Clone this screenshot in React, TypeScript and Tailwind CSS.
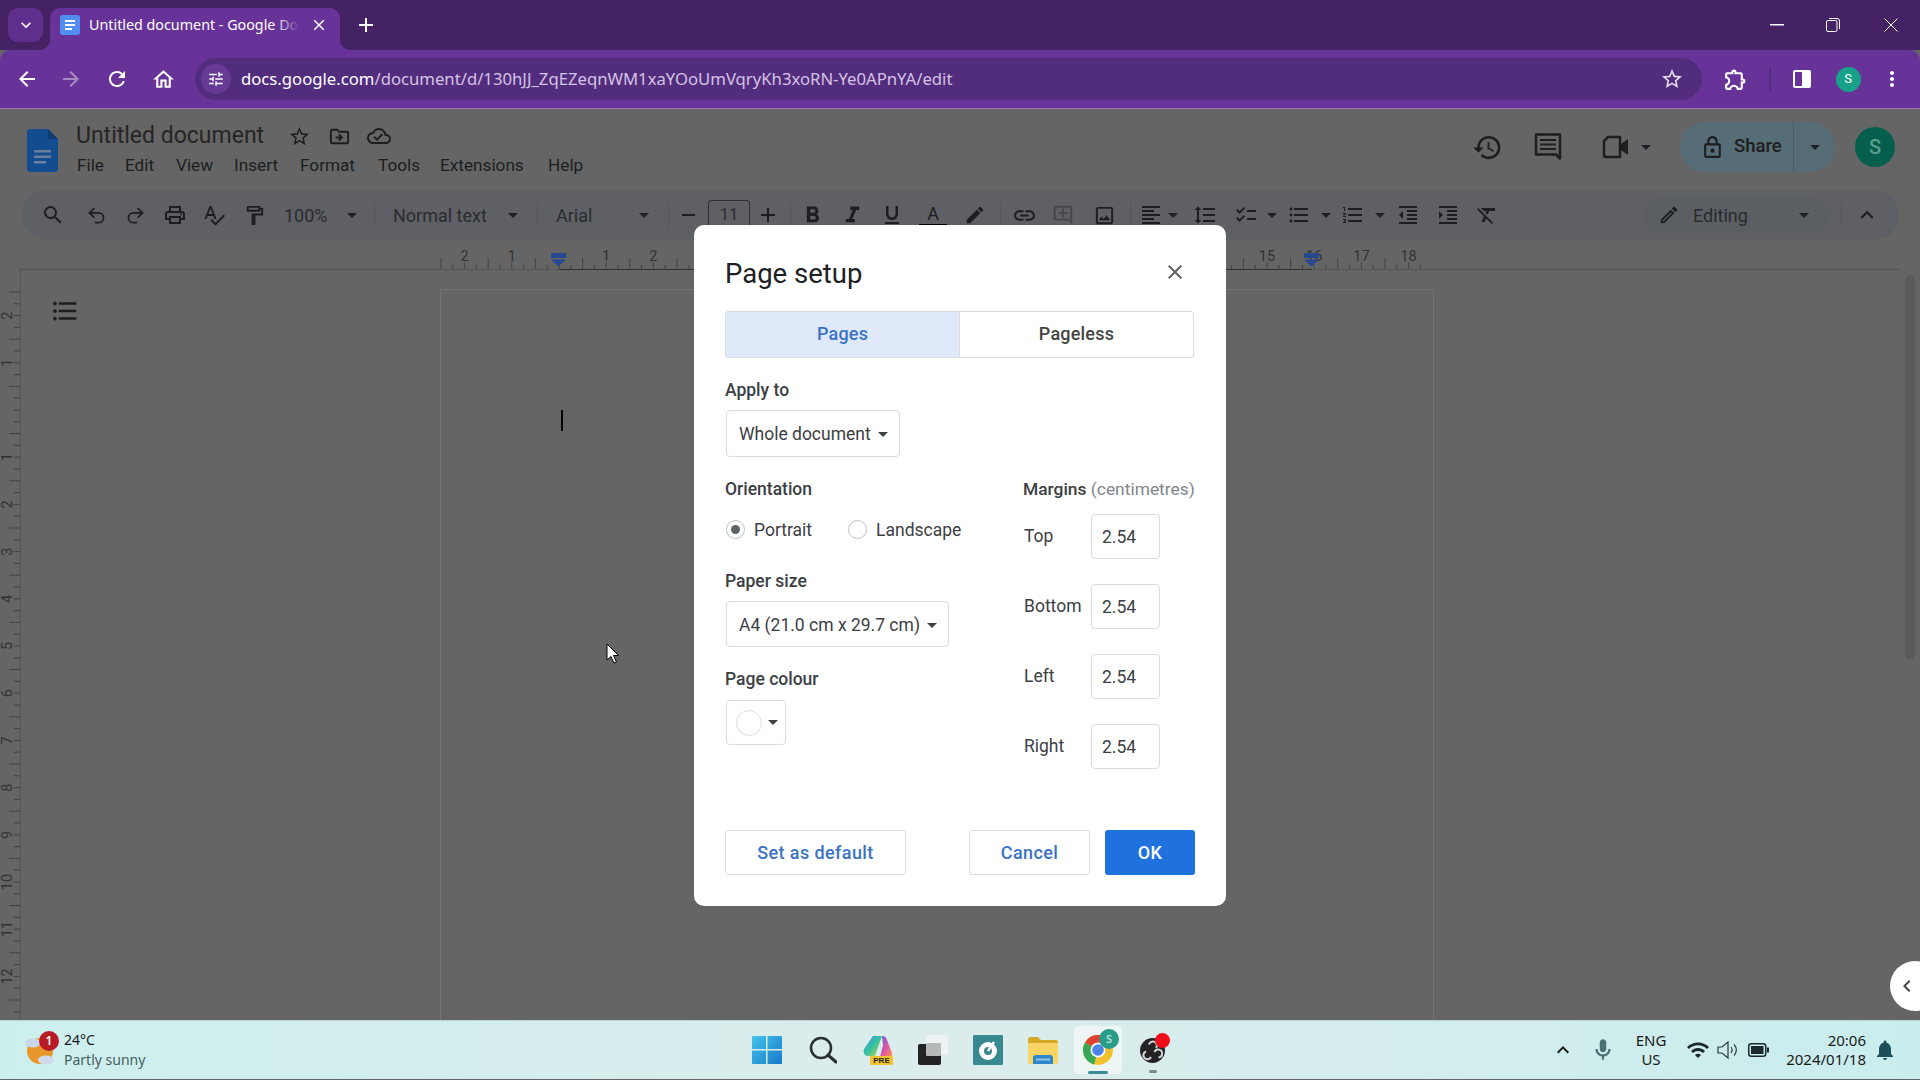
import React from "react";
import {
  MdSearch, MdOutlinePrint, MdSpellcheck, MdOutlineFormatPaint, MdFormatBold, MdFormatItalic,
  MdFormatUnderlined, MdLink, MdOutlineAddComment, MdOutlineImage, MdFormatAlignLeft, MdFormatLineSpacing, MdChecklist,
  MdFormatListBulleted, MdFormatListNumbered, MdFormatIndentDecrease, MdFormatIndentIncrease, MdFormatClear, MdHistory,
  MdOutlineLock, MdOutlineEdit, MdExpandLess, MdStarBorder, MdOutlineDriveFileMove, MdOutlineCloudDone, MdArrowBack,
  MdArrowForward, MdRefresh, MdOutlineHome, MdOutlineExtension, MdMoreVert, MdClose, MdAdd, MdKeyboardArrowDown,
  MdWifi, MdOutlineMic, MdNotifications, MdKeyboardArrowUp, MdChevronLeft, MdOutlineTune, MdEdit,
} from "react-icons/md";
import { Undo2, Redo2 } from "lucide-react";

const Caret = ({ c = "border-t-[#202124]" }: { c?: string }) => (
  <div className="w-[12px] shrink-0 flex justify-center">
    <div className={`w-0 h-0 border-x-[5px] border-x-transparent border-t-[5px] ${c}`} />
  </div>
);
const Div = ({ c }: { c: string }) => <div className={`w-px h-[24px] bg-[#54565a] shrink-0 ${c}`} />;
const Cell = ({ c, children }: { c: string; children: React.ReactNode }) => (
  <div className={`flex items-center justify-center shrink-0 text-[#1d1e20] ${c}`}>{children}</div>
);

function HRuler() {
  const ticks: React.ReactNode[] = [];
  for (let n = 0; n < 21; n++) {
    const x = 441 + 47.2 * n;
    ticks.push(<line key={`a${n}`} x1={x} x2={x} y1={18} y2={29} stroke="#444" />);
    ticks.push(<line key={`b${n}`} x1={x + 11.8} x2={x + 11.8} y1={25} y2={29} stroke="#444" />);
    ticks.push(<line key={`c${n}`} x1={x + 23.6} x2={x + 23.6} y1={22} y2={29} stroke="#444" />);
    ticks.push(<line key={`d${n}`} x1={x + 35.4} x2={x + 35.4} y1={25} y2={29} stroke="#444" />);
    const lx = x + 23.6;
    if (n !== 2 && (lx < 690 || lx > 1230)) {
      ticks.push(
        <text key={`t${n}`} x={lx} y={21} textAnchor="middle" fontSize="14.5" fill="#333" fontFamily="Roboto, sans-serif">
          {Math.abs(n - 2)}
        </text>
      );
    }
  }
  return (
    <svg width="1920" height="30" viewBox="0 0 1920 30" className="block shrink-0">
      <line x1="20" x2="1900" y1="29.5" y2="29.5" stroke="#555" />
      <line x1="559" x2="1312" y1="29.5" y2="29.5" stroke="#333" />
      {ticks}
      <rect x="551" y="13" width="15" height="5" fill="#28498f" />
      <path d="M551 19.5h15l-7.5 7z" fill="#28498f" />
      <rect x="1304" y="13" width="15" height="5" fill="#28498f" />
      <path d="M1304 19.5h15l-7.5 7z" fill="#28498f" />
    </svg>
  );
}

function VRuler() {
  const t: React.ReactNode[] = [];
  for (let m = -10; m <= 51; m++) {
    const y = 140 + 11.8 * m;
    const major = ((m + 2) % 4 + 4) % 4 === 0;
    t.push(<line key={m} x1={major ? 9 : 13.5} x2={20} y1={y} y2={y} stroke="#444" />);
  }
  [-2, -1, 1, 2, 3, 4, 5, 6, 7, 8, 9, 10, 11, 12].forEach((k) => {
    const y = 140 + 47.2 * k;
    t.push(
      <text key={`n${k}`} x={0} y={0} transform={`translate(12 ${y}) rotate(-90)`} textAnchor="middle" fontSize="14.5" fill="#333" fontFamily="Roboto, sans-serif">
        {Math.abs(k)}
      </text>
    );
  });
  return (
    <svg width="21" height="750" viewBox="0 0 21 750" className="block shrink-0">
      <line x1="20.5" x2="20.5" y1="0" y2="750" stroke="#555" />
      {t}
    </svg>
  );
}

const DocsLogo = () => (
  <svg width="31" height="43" viewBox="0 0 31 43" className="shrink-0">
    <path d="M3 0h18l10 10v30a3 3 0 0 1-3 3H3a3 3 0 0 1-3-3V3a3 3 0 0 1 3-3z" fill="#134d90" />
    <path d="M21 0l10 10H21z" fill="#0e3b70" />
    <path d="M7 21h17v2.5H7zM7 26.5h17V29H7zM7 32h12v2.5H7z" fill="#6a7f9c" />
  </svg>
);

const Label = ({ c, children }: { c?: string; children: React.ReactNode }) => (
  <div className={`h-[24px] leading-[24px] text-[17.5px] font-medium text-[#3c4043] ${c ?? ""}`}>{children}</div>
);

const Box = ({ c, children }: { c: string; children: React.ReactNode }) => (
  <div className={`border border-[#dadce0] rounded-[4px] flex items-center shrink-0 text-[#3c4043] text-[17.5px] ${c}`}>{children}</div>
);

const Margin = ({ label, c }: { label: string; c?: string }) => (
  <div className={`flex items-center h-[45px] ${c ?? ""}`}>
    <div className="w-[68px] pl-px pb-px text-[17.5px] text-[#3c4043]">{label}</div>
    <Box c="w-[69px] h-[45px] pl-[10px] pt-[2px]">2.54</Box>
  </div>
);

function Dialog() {
  return (
    <div className="absolute left-[694px] top-[225px] w-[532px] h-[681px] bg-white rounded-[10px] pl-[31px] pr-[32px] pb-[31px] flex flex-col">
      <div className="h-[86px] flex items-center justify-between shrink-0 pt-[8px]">
        <div className="text-[27.5px] text-[#202124] leading-none mt-[4px]">Page setup</div>
        <MdClose className="text-[#5f6368] mr-[7px]" size={24} />
      </div>
      <div className="flex h-[47px] border border-[#dadce0] rounded-[3px] shrink-0 text-[18px] tracking-[0.2px] pb-[2px]">
        <div className="w-[234px] -mb-[2px] pb-[2px] bg-[#dfe9f9] text-[#3b73c4] font-medium flex items-center justify-center border-r border-[#dadce0]">Pages</div>
        <div className="flex-1 text-[#444] font-medium flex items-center justify-center">Pageless</div>
      </div>
      <div className="flex justify-between">
        <div className="flex flex-col">
          <Label c="mt-[20px]">Apply to</Label>
          <Box c="mt-[8px] ml-px w-[174px] h-[47px] pl-[12px] pt-[2px]">
            <span>Whole document</span>
            <div className="w-0 h-0 ml-[7px] border-x-[5px] border-x-transparent border-t-[5px] border-t-[#3c4043]" />
          </Box>
          <Label c="mt-[20px]">Orientation</Label>
          <div className="mt-[14px] h-[28px] flex items-center text-[17.5px] text-[#3c4043]">
            <div className="w-[19px] h-[19px] ml-px rounded-full border border-[#bdc1c6] flex items-center justify-center">
              <div className="w-[9px] h-[9px] rounded-full bg-[#5f6368]" />
            </div>
            <span className="ml-[9px] mt-[2px]">Portrait</span>
            <div className="w-[19px] h-[19px] ml-[36px] rounded-full border border-[#bdc1c6]" />
            <span className="ml-[9px] mt-[2px]">Landscape</span>
          </div>
          <Label c="mt-[26px]">Paper size</Label>
          <Box c="mt-[8px] ml-px w-[223px] h-[46px] pl-[12px] pt-[2px]">
            <span>A4 (21.0 cm x 29.7 cm)</span>
            <div className="w-0 h-0 ml-[7px] border-x-[5px] border-x-transparent border-t-[5px] border-t-[#3c4043]" />
          </Box>
          <Label c="mt-[20px]">Page colour</Label>
          <Box c="mt-[9px] ml-px w-[60px] h-[45px] pl-[9px]">
            <div className="w-[26px] h-[26px] rounded-full border border-[#dadce0]" />
            <div className="w-0 h-0 ml-[6px] border-x-[5px] border-x-transparent border-t-[5px] border-t-[#3c4043]" />
          </Box>
        </div>
        <div className="flex flex-col w-[171px] pt-[119px]">
          <div className="h-[24px] leading-[24px] text-[17.4px] whitespace-nowrap">
            <span className="font-medium text-[#3c4043]">Margins</span> <span className="text-[#80868b]">(centimetres)</span>
          </div>
          <Margin label="Top" c="mt-[13px]" />
          <Margin label="Bottom" c="mt-[25px]" />
          <Margin label="Left" c="mt-[25px]" />
          <Margin label="Right" c="mt-[25px]" />
        </div>
      </div>
      <div className="mt-auto flex text-[18px] font-medium tracking-[0.4px]">
        <div className="w-[181px] shrink-0 h-[45px] border border-[#dadce0] rounded-[3px] text-[#3b73c4] flex items-center justify-center">Set as default</div>
        <div className="ml-[63px] w-[121px] shrink-0 h-[45px] border border-[#dadce0] rounded-[3px] text-[#3b73c4] flex items-center justify-center">Cancel</div>
        <div className="ml-[15px] w-[90px] shrink-0 h-[45px] rounded-[3px] bg-[#1f72de] text-white flex items-center justify-center">OK</div>
      </div>
    </div>
  );
}

const Chrome = () => (
  <svg width="30" height="30" viewBox="0 0 30 30">
    <circle cx="15" cy="15" r="15" fill="#f2c12e" />
    <path d="M15 15L2 7.5A15 15 0 0 1 28 7.5z" fill="#e0402f" />
    <path d="M15 15L2 7.5A15 15 0 0 0 11 29.5z" fill="#3aa757" />
    <circle cx="15" cy="15" r="7.5" fill="#fff" />
    <circle cx="15" cy="15" r="5.8" fill="#4c85e8" />
  </svg>
);

function Taskbar() {
  return (
    <div className="h-[59px] shrink-0 border-t border-[#b9d2d2] bg-linear-to-r from-[#ccefee] via-[#dcecec] to-[#c9eded] flex items-center font-['Noto_Sans'] text-[#1a1a1a]">
      <div className="relative w-[30px] h-[32px] ml-[25px] shrink-0">
        <svg width="30" height="32" viewBox="0 0 30 32">
          <circle cx="15" cy="17" r="13" fill="#e8982a" />
          <ellipse cx="8" cy="9" rx="7.5" ry="4.5" fill="#c9d6ea" />
          <ellipse cx="21" cy="26" rx="8" ry="4.5" fill="#cfd9ea" />
        </svg>
        <div className="absolute left-[14px] -top-[3px] w-[20px] h-[20px] rounded-full bg-[#b81c25] text-white text-[12px] font-semibold flex items-center justify-center">1</div>
      </div>
      <div className="ml-[9px] w-[120px] shrink-0 leading-[20px]">
        <div className="text-[14px]">24°C</div>
        <div className="text-[14px] text-[#47605f]">Partly sunny</div>
      </div>
      <div className="ml-[568px] w-[30px] h-[30px] shrink-0">
        <svg width="30" height="30" viewBox="0 0 30 30">
          <defs>
            <linearGradient id="w" x1="0" y1="0" x2="1" y2="1">
              <stop offset="0" stopColor="#45c5ec" />
              <stop offset="1" stopColor="#1679c9" />
            </linearGradient>
          </defs>
          <path d="M1 1h13v13H0V2a1 1 0 0 1 1-1zM15.500 1H29a1 1 0 0 1 1 1v12H15.500zM0 15.500h14V29H1a1 1 0 0 1-1-1zM15.500 15.500H30V28a1 1 0 0 1-1 1H15.500z" fill="url(#w)" />
        </svg>
      </div>
      <div className="ml-[27px] w-[28px] shrink-0">
        <svg width="28" height="28" viewBox="0 0 28 28" fill="none" stroke="#2a2f30" strokeWidth="2.500">
          <circle cx="12" cy="12" r="10" />
          <path d="M19 19l8 7" strokeLinecap="round" strokeWidth="3" />
        </svg>
      </div>
      <div className="relative ml-[26px] w-[30px] h-[30px] shrink-0">
        <svg width="30" height="28" viewBox="0 0 30 28">
          <defs>
            <linearGradient id="c1" x1="0" y1="0" x2="1" y2="1">
              <stop offset="0" stopColor="#3d8ee8" />
              <stop offset="0.5" stopColor="#35c3a0" />
              <stop offset="1" stopColor="#d9d63c" />
            </linearGradient>
            <linearGradient id="c2" x1="0" y1="0" x2="1" y2="1">
              <stop offset="0" stopColor="#6a5be2" />
              <stop offset="0.6" stopColor="#e85a9c" />
              <stop offset="1" stopColor="#f4a23c" />
            </linearGradient>
          </defs>
          <path d="M10 1h9l-7 20H5C1 21 0 17 1 14z" fill="url(#c1)" />
          <path d="M19 1c3 0 4 1 5 4l5 13c1 3-1 4-3 4h-9l3-12z" fill="url(#c2)" />
        </svg>
        <div className="absolute left-[7px] top-[21px] w-[23px] h-[9px] bg-[#f4c430] rounded-[1px] text-[8px] font-bold leading-[9px] text-[#222] text-center font-['Liberation_Sans']">PRE</div>
      </div>
      <div className="relative ml-[25px] w-[31px] h-[30px] shrink-0">
        <div className="absolute right-[1px] top-0 w-[22px] h-[20px] bg-[#eef2f2] rounded-[2px]" />
        <div className="absolute left-0 bottom-0 w-[23px] h-[21px] bg-[#232323] rounded-[2px]" />
        <div className="absolute left-[8px] top-[8px] w-[15px] h-[13px] bg-[#b8b8b8] rounded-[1px]" />
      </div>
      <div className="ml-[24px] w-[30px] h-[30px] bg-[#37888f] rounded-[1px] shrink-0 flex items-center justify-center">
        <svg width="24" height="24" viewBox="0 0 24 24">
          <circle cx="12" cy="13" r="9" fill="#fff" />
          <circle cx="12" cy="13" r="4" fill="#37888f" />
          <path d="M12 13l6-9" stroke="#fff" strokeWidth="2.500" />
        </svg>
      </div>
      <div className="ml-[25px] w-[30px] h-[28px] shrink-0">
        <svg width="30" height="28" viewBox="0 0 30 28">
          <path d="M0 3a2 2 0 0 1 2-2h8l3 3h15a2 2 0 0 1 2 2v3H0z" fill="#d8a928" />
          <path d="M0 7h30v19a2 2 0 0 1-2 2H2a2 2 0 0 1-2-2z" fill="#f8d666" />
          <path d="M5 22a3 3 0 0 1 3-3h14a3 3 0 0 1 3 3v6H5z" fill="#2e87c8" />
          <rect x="8" y="22.500" width="14" height="2" fill="#8ec6ea" />
        </svg>
      </div>
      <div className="relative ml-[16px] w-[48px] h-[48px] bg-[#eef5f5] rounded-[4px] shrink-0 flex items-center justify-center">
        <Chrome />
        <div className="absolute left-[25px] top-[3px] w-[20px] h-[20px] rounded-full bg-[#2a9d88] text-white/70 text-[11px] font-semibold flex items-center justify-center">S</div>
        <div className="absolute left-[14px] top-[45px] w-[20px] h-[3px] rounded-full bg-[#3a8a94]" />
      </div>
      <div className="relative ml-[18px] w-[25px] h-[25px] rounded-full bg-[#232326] shrink-0 flex items-center justify-center">
        <svg width="21" height="21" viewBox="0 0 21 21" fill="none" stroke="#d5d5d5" strokeWidth="2">
          <path d="M7 4.500a4 4 0 1 1 7 3.500" />
          <path d="M9 17a4 4 0 1 1-5-5.500" />
          <path d="M12.500 12a4 4 0 1 1 4 5.500" />
        </svg>
        <div className="absolute left-[15px] -top-[5px] w-[15px] h-[15px] rounded-full bg-[#ee0d18]" />
        <div className="absolute left-[9px] top-[32px] w-[8px] h-[3px] rounded-full bg-[#7a8888]" />
      </div>
      <MdKeyboardArrowUp size={24} className="ml-[386px] shrink-0 text-[#1a1a1a]" />
      <MdOutlineMic size={26} className="ml-[15px] shrink-0 text-[#4a7174]" />
      <div className="ml-[19px] w-[32px] shrink-0 text-center text-[15px] leading-[19px]">
        <div>ENG</div>
        <div>US</div>
      </div>
      <MdWifi size={24} className="ml-[19px] shrink-0 text-[#1a2a2c]" />
      <svg width="22" height="20" viewBox="0 0 22 20" fill="none" stroke="#2a3a3c" strokeWidth="1.200" className="ml-[7px] shrink-0">
        <path d="M1 7h4l6-5v16l-6-5H1zM14 7c1.500 2 1.500 4 0 6M17 4.500c3 3.500 3 7.500 0 11" />
      </svg>
      <svg width="21" height="14" viewBox="0 0 21 14" className="ml-[9px] shrink-0">
        <rect x="0.750" y="0.750" width="17" height="12.500" rx="2.500" fill="none" stroke="#1a2a2c" strokeWidth="1.500" />
        <rect x="3" y="3" width="12.500" height="8" fill="#1a2a2c" />
        <rect x="19" y="4.500" width="2" height="5" fill="#1a2a2c" />
      </svg>
      <div className="ml-[17px] w-[80px] shrink-0 text-right text-[15px] leading-[19px]">
        <div>20:06</div>
        <div>2024/01/18</div>
      </div>
      <MdNotifications size={24} className="ml-[7px] shrink-0 text-[#1d4f5a]" />
    </div>
  );
}

export default function App() {
  return (
    <div className="relative w-[1920px] h-[1080px] overflow-hidden flex flex-col bg-[#656565] font-[Roboto]">
      {/* Tab strip */}
      <div className="h-[50px] shrink-0 bg-[#452264] flex items-end text-white">
        <div className="ml-[8px] mb-[8px] w-[35px] h-[34px] rounded-[10px] bg-[#5f2f8e] flex items-center justify-center">
          <MdKeyboardArrowDown size={20} />
        </div>
        <div className="relative ml-[7px] w-[290px] h-[42px] pb-[8px] bg-[#673399] rounded-t-[10px] flex items-center">
          <svg width="10" height="10" viewBox="0 0 10 10" className="absolute -left-[10px] bottom-0"><path d="M10 0v10H0a10 10 0 0 0 10-10z" fill="#673399" /></svg>
          <svg width="10" height="10" viewBox="0 0 10 10" className="absolute -right-[10px] bottom-0"><path d="M0 0v10h10A10 10 0 0 1 0 0z" fill="#673399" /></svg>
          <svg width="20" height="20" viewBox="0 0 20 20" className="ml-[10px] shrink-0">
            <rect width="20" height="20" rx="2.500" fill="#4f8df0" />
            <path d="M5 5h10v2H5zM5 9h10v2H5zM5 13h7v2H5z" fill="#fff" />
          </svg>
          <div className="relative ml-[9px] w-[210px] h-[20px] leading-[20px] overflow-hidden whitespace-nowrap font-['Noto_Sans'] text-[14.3px] text-white">
            Untitled document - Google Docs
            <div className="absolute right-0 top-0 h-full w-[24px] bg-linear-to-r from-transparent to-[#673399]" />
          </div>
          <MdClose size={18} className="ml-[11px] shrink-0" />
        </div>
        <MdAdd size={24} className="ml-[14px] mb-[13px] shrink-0" />
        <svg width="14" height="2" viewBox="0 0 14 2" className="ml-[1392px] mb-[24px] shrink-0"><rect width="14" height="1.500" fill="#fff" /></svg>
        <svg width="14" height="14" viewBox="0 0 14 14" fill="none" stroke="#fff" className="ml-[42px] mb-[18px] shrink-0">
          <rect x="0.500" y="2.500" width="10.500" height="11" rx="1.500" />
          <path d="M3 .5h8a2.500 2.500 0 0 1 2.500 2.500v8" />
        </svg>
        <svg width="14" height="14" viewBox="0 0 14 14" fill="none" stroke="#fff" className="ml-[44px] mb-[18px] shrink-0"><path d="M.5.5l13 13M13.500.5l-13 13" /></svg>
      </div>
      {/* Browser toolbar */}
      <div className="h-[59px] shrink-0 bg-[#673399] border-b border-[#9d7fb8] pt-[8px] pb-[8px] flex items-center text-white rounded-tl-[10px] rounded-tr-[10px]">
        <Cell c="w-[44px] ml-[5px] text-white"><MdArrowBack size={24} /></Cell>
        <Cell c="w-[44px] text-[#a78cc4]"><MdArrowForward size={24} /></Cell>
        <Cell c="w-[48px] text-white"><MdRefresh size={24} /></Cell>
        <Cell c="w-[44px] text-white"><MdOutlineHome size={25} /></Cell>
        <div className="ml-[10px] w-[1507px] h-[42px] rounded-full bg-[#532d7d] flex items-center pl-[6px]">
          <div className="w-[30px] h-[30px] rounded-full bg-[#673a96] flex items-center justify-center shrink-0">
            <MdOutlineTune size={18} />
          </div>
          <div className="ml-[10px] text-[16.7px] font-['Noto_Sans'] whitespace-nowrap">
            <span className="text-white">docs.google.com</span>
            <span className="text-[#d3c3e4]">/document/d/130hJJ_ZqEZeqnWM1xaYOoUmVqryKh3xoRN-Ye0APnYA/edit</span>
          </div>
          <MdStarBorder size={24} className="ml-auto mr-[18px] text-[#e7dff0] shrink-0" />
        </div>
        <Cell c="w-[44px] ml-[11px] text-white"><MdOutlineExtension size={25} /></Cell>
        <div className="ml-[12px] w-[2px] h-[24px] bg-[#532d7d] shrink-0" />
        <Cell c="w-[62px] text-white">
          <div className="w-[18px] h-[18px] rounded-[2px] border-2 border-white flex justify-end"><div className="w-[7px] bg-white" /></div>
        </Cell>
        <Cell c="w-[30px] text-white">
          <div className="w-[25px] h-[25px] rounded-full bg-[#17a188] text-white text-[13px] flex items-center justify-center">S</div>
        </Cell>
        <Cell c="w-[57px] text-white"><MdMoreVert size={24} /></Cell>
      </div>
      {/* Docs header */}
      <div className="h-[81px] shrink-0 flex pl-[27px] items-start">
        <div className="mt-[20px]"><DocsLogo /></div>
        <div className="ml-[18px] mt-[12px]">
          <div className="flex items-center h-[30px]">
            <div className="w-[205px] text-[23px] text-[#252525] whitespace-nowrap">Untitled document</div>
            <Cell c="w-[36px]"><MdStarBorder size={23} /></Cell>
            <Cell c="w-[44px]"><MdOutlineDriveFileMove size={23} /></Cell>
            <Cell c="w-[36px]"><MdOutlineCloudDone size={24} /></Cell>
          </div>
          <div className="flex items-center h-[28px] mt-[1px] ml-px text-[17.2px] text-[#1d1e20]">
            <div className="w-[48px]">File</div>
            <div className="w-[51px]">Edit</div>
            <div className="w-[58px]">View</div>
            <div className="w-[66px]">Insert</div>
            <div className="w-[78px]">Format</div>
            <div className="w-[62px]">Tools</div>
            <div className="w-[108px]">Extensions</div>
            <div>Help</div>
          </div>
        </div>
        <div className="ml-auto flex items-center h-[50px] mt-[13px]">
          <Cell c="w-[60px]"><MdHistory size={31} /></Cell>
          <Cell c="w-[62px]">
            <svg width="28" height="28" viewBox="0 0 28 28" fill="none" stroke="#1d1e20" strokeWidth="2.500">
              <path d="M2 1.500h24v24l-4-4H2z" strokeLinejoin="round" />
              <path d="M6 7h16M6 11.500h16M6 16h16" strokeWidth="2" />
            </svg>
          </Cell>
          <Cell c="w-[50px] ml-[11px]">
            <svg width="27" height="24" viewBox="0 0 27 24" fill="none" stroke="#1d1e20" strokeWidth="2.500">
              <path d="M6 2h12v20H4a2 2 0 0 1-2-2V6z" strokeLinejoin="round" />
              <path d="M19 9l7-5v16l-7-5z" fill="#1d1e20" stroke="none" />
            </svg>
          </Cell>
          <Caret />
          <div className="ml-[28px] w-[155px] h-[50px] rounded-full bg-[#566c76] flex items-center text-[#1d1e20]">
            <MdOutlineLock size={25} className="ml-[20px] shrink-0" />
            <span className="ml-[9px] text-[18.5px] font-medium w-[59px]">Share</span>
            <div className="w-px h-full bg-[#4a5d66]" />
            <div className="flex-1 flex justify-center"><Caret /></div>
          </div>
          <div className="ml-[20px] mr-[25px] w-[40px] h-[40px] rounded-full bg-[#055f4c] text-[#5b9e90] text-[20px] font-medium flex items-center justify-center">S</div>
        </div>
      </div>
      {/* Docs toolbar */}
      <div className="ml-[22px] w-[1877px] h-[50px] shrink-0 rounded-full bg-[#5e6066] flex items-center pl-[11px] text-[#2a2b2e]">
        <Cell c="w-[40px]"><MdSearch size={24} /></Cell>
        <Cell c="w-[46px]"><Undo2 size={21} strokeWidth={2} /></Cell>
        <Cell c="w-[32px]"><Redo2 size={21} strokeWidth={2} /></Cell>
        <Cell c="w-[48px]"><MdOutlinePrint size={24} /></Cell>
        <Cell c="w-[30px]"><MdSpellcheck size={24} /></Cell>
        <Cell c="w-[50px]"><MdOutlineFormatPaint size={23} /></Cell>
        <div className="w-[67px] pl-[5px] text-[18px] shrink-0">100%</div>
        <Caret />
        <Div c="ml-[16px]" />
        <div className="w-[132px] pl-[18px] text-[18px] shrink-0">Normal text</div>
        <Caret />
        <Div c="ml-[18px]" />
        <div className="w-[100px] pl-[18px] text-[18px] shrink-0">Arial</div>
        <Caret />
        <Div c="ml-[18px]" />
        <Cell c="w-[39px]"><div className="w-[13px] h-[2px] bg-[#1d1e20]" /></Cell>
        <div className="w-[42px] h-[30px] self-start mt-[10px] border border-[#2e2f31] border-b-0 rounded-t-[4px] flex items-center justify-center text-[16.5px] shrink-0">11</div>
        <Cell c="w-[36px]"><MdAdd size={24} /></Cell>
        <Div c="ml-[4px]" />
        <Cell c="w-[42px]"><MdFormatBold size={27} /></Cell>
        <Cell c="w-[39px]"><MdFormatItalic size={27} /></Cell>
        <Cell c="w-[40px]"><MdFormatUnderlined size={24} /></Cell>
        <Cell c="w-[42px]">
          <div className="flex flex-col items-center w-[28px] mt-[2px]">
            <span className="text-[18px] leading-[20px]">A</span>
            <div className="w-[28px] h-[4px] bg-black" />
          </div>
        </Cell>
        <Cell c="w-[42px]"><MdEdit size={22} /></Cell>
        <Div c="ml-[4px]" />
        <Cell c="w-[46px]"><MdLink size={25} /></Cell>
        <Cell c="w-[32px] text-[#45474a]"><MdOutlineAddComment size={22} /></Cell>
        <Cell c="w-[50px]"><MdOutlineImage size={23} /></Cell>
        <Div c="ml-px" />
        <Cell c="w-[36px] pl-[4px]"><MdFormatAlignLeft size={24} /></Cell>
        <Caret />
        <Cell c="w-[52px]"><MdFormatLineSpacing size={24} /></Cell>
        <Cell c="w-[30px]"><MdChecklist size={24} /></Cell>
        <div className="ml-[5px]"><Caret /></div>
        <Cell c="w-[42px]"><MdFormatListBulleted size={24} /></Cell>
        <Caret />
        <Cell c="w-[42px]"><MdFormatListNumbered size={24} /></Cell>
        <Caret />
        <Cell c="w-[44px]"><MdFormatIndentDecrease size={24} /></Cell>
        <Cell c="w-[36px]"><MdFormatIndentIncrease size={24} /></Cell>
        <Cell c="w-[42px]"><MdFormatClear size={24} /></Cell>
        <div className="ml-auto w-[187px] h-[36px] rounded-full bg-[#5b5e63] flex items-center shrink-0">
          <MdOutlineEdit size={22} className="ml-[15px] text-[#1d1e20]" />
          <span className="ml-[13px] text-[18px] w-[105px]">Editing</span>
          <Caret />
        </div>
        <Div c="ml-[11px]" />
        <Cell c="w-[50px]"><MdExpandLess size={26} /></Cell>
        <div className="w-[7px] shrink-0" />
      </div>
      <HRuler />
      {/* Canvas */}
      <div className="relative flex h-[750px] shrink-0 overflow-hidden">
        <VRuler />
        <div className="flex-1 flex pt-[19px] items-start">
          <div className="w-[43px] h-[43px] ml-[22px] shrink-0 flex items-center justify-center text-[#1d1e20]"><MdFormatListBulleted size={30} /></div>
          <div className="ml-[354px] w-[994px] h-[731px] border-l border-t border-r border-[#737373] shrink-0 pl-[120px] pt-[120px]">
            <div className="w-[2px] h-[21px] bg-black" />
          </div>
        </div>
        <div className="absolute left-[1905px] top-[5px] w-[10px] h-[385px] rounded-full bg-[#5a5a5a]" />
        <div className="absolute left-[1890px] top-[691px] w-[50px] h-[50px] rounded-full bg-white flex items-center pl-[5px] text-[#444]"><MdChevronLeft size={24} /></div>
      </div>
      <Taskbar />
      <Dialog />
      <svg width="16" height="22" viewBox="0 0 16 22" className="absolute left-[606px] top-[643px]">
        <path d="M1 1v16l4-3.500 3 6.500 2.500-1-3-6.500h5z" fill="#fff" stroke="#000" />
      </svg>
    </div>
  );
}
